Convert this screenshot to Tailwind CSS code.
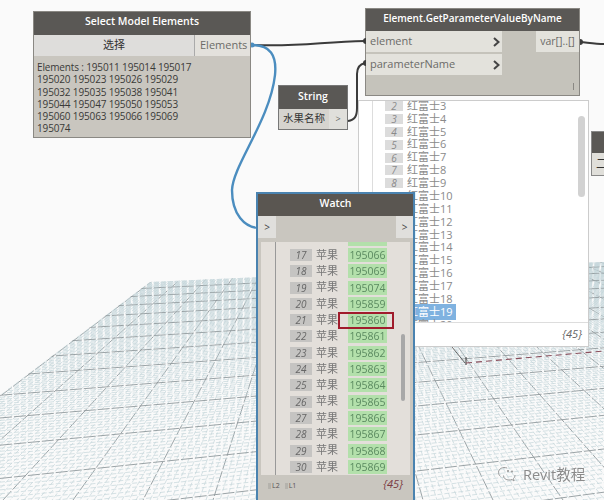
<!DOCTYPE html>
<html lang="en">
<head>
  <meta charset="UTF-8" />
  <title>Dynamo Graph</title>
  <script src="https://cdn.jsdelivr.net/npm/@tailwindcss/browser@4"></script>
</head>
<body class="bg-[#fafafa] font-['Open_Sans','Noto_Sans_CJK_SC',sans-serif] overflow-hidden">
<div class="relative w-[604px] h-[500px] overflow-hidden blur-[0.4px]">

  <!-- ground grid, filled in by the script below -->
  <svg class="absolute inset-0" width="604" height="500" fill="none">
    <defs><clipPath id="ground"><polygon points="0,395 150,282 604,262 604,500 0,500" /></clipPath></defs>
    <g id="grid" clip-path="url(#ground)"></g>
    <path d="M452 347L465 363" stroke="#444" stroke-width="0.8" />
    <path d="M466 357V365" stroke="#333" stroke-width="1" />
    <path d="M466 363L604 351" stroke="#8a4f5c" stroke-width="1.1" stroke-dasharray="6 4" />
  </svg>

  <!-- wires -->
  <svg class="absolute inset-0" width="604" height="500" fill="none">
    <path d="M252 45C300 47 320 42 365 41" stroke="#3b3b3b" stroke-width="2" />
    <path d="M580 42C590 43 596 44 604 44" stroke="#3b3b3b" stroke-width="2" />
    <path d="M348 121C355 120 357 116 357 108V74C357 68 360 64 365 63" stroke="#3b3b3b" stroke-width="2" />
    <path d="M252 45C270 45 277 55 275 75C270 120 233 165 232 190C232 215 245 227 258 228" stroke="#4b8dbf" stroke-width="2.4" />
    <circle cx="252" cy="45" r="2.500" fill="#4b8dbf" />
  </svg>

  <!-- Select Model Elements -->
  <div class="absolute left-[33px] top-[11px] w-[218px] h-[127px] flex flex-col border border-[#8a8883] bg-[#c9c6bf]">
    <div class="h-[23px] shrink-0 pb-[3px] bg-[#5a5855] text-white text-[10.5px] font-semibold flex items-center justify-center">Select Model Elements</div>
    <div class="h-[21px] shrink-0 flex text-[11px]">
      <div class="w-[161px] bg-[#dedddb] text-[#333] flex items-center justify-center border-r border-[#aaa]">选择</div>
      <div class="flex-1 bg-[#e3e1dc] text-[#6b6b68] flex items-center pl-[5px]">Elements</div>
    </div>
    <div class="px-[3px] pt-[5px] text-[10px] tracking-[-0.15px] leading-[12.3px] text-[#3a3a38] whitespace-nowrap">Elements : 195011 195014 195017<br />195020 195023 195026 195029<br />195032 195035 195038 195041<br />195044 195047 195050 195053<br />195060 195063 195066 195069<br />195074</div>
  </div>

  <!-- Element.GetParameterValueByName -->
  <div class="absolute left-[365px] top-[8px] w-[215px] h-[88px] flex flex-col border border-[#8a8883] bg-[#c5c3bb]">
    <div class="h-[22px] shrink-0 pb-[4px] bg-[#5a5855] text-white text-[10px] font-semibold flex items-center justify-center">Element.GetParameterValueByName</div>
    <div class="flex justify-between">
      <div class="w-[136px] flex flex-col gap-[2px] text-[11px] text-[#6b6b68]">
        <div class="h-[21px] bg-[#e3e2dc] flex items-center justify-between pl-[4px] pr-[2px]">element
          <svg width="7" height="10" viewBox="0 0 7 10" fill="none" stroke="#444" stroke-width="2"><path d="M1 1L5.500 5L1 9" /></svg>
        </div>
        <div class="h-[21px] bg-[#e3e2dc] flex items-center justify-between pl-[4px] pr-[2px]">parameterName
          <svg width="7" height="10" viewBox="0 0 7 10" fill="none" stroke="#444" stroke-width="2"><path d="M1 1L5.500 5L1 9" /></svg>
        </div>
      </div>
      <div class="w-[43px] h-[21px] bg-[#e3e2dc] text-[10.500px] text-[#6b6b68] flex items-center justify-center">var[]..[]</div>
    </div>
    <div class="absolute right-[5px] bottom-[5px] w-px h-[7px] bg-[#8a8883]"></div>
  </div>
  <div class="absolute left-[363px] top-[38px] w-[3px] h-[6px] bg-[#3b3b3b] rounded-l-full"></div>
  <div class="absolute left-[363px] top-[60px] w-[3px] h-[6px] bg-[#3b3b3b] rounded-l-full"></div>
  <div class="absolute left-[580px] top-[39px] w-[3px] h-[6px] bg-[#3b3b3b] rounded-r-full"></div>

  <!-- String -->
  <div class="absolute left-[278px] top-[85px] w-[70px] h-[45px] flex flex-col border border-[#777] bg-[#c9c6bf]">
    <div class="h-[23px] shrink-0 pb-[2px] bg-[#5a5855] text-white text-[10.5px] font-semibold flex items-center justify-center">String</div>
    <div class="flex-1 flex text-[10.5px]">
      <div class="w-[50px] bg-[#d6d4cf] text-[#333] flex items-center justify-center whitespace-nowrap">水果名称</div>
      <div class="flex-1 bg-[#e0dfdb] text-[#666] text-[9px] flex items-center justify-center">&gt;</div>
    </div>
  </div>

  <!-- code block output list -->
  <div class="absolute left-[358px] top-[100px] w-[231px] h-[247px] bg-white border border-[#ccc] flex flex-col">
    <div class="flex-1 flex overflow-hidden relative">
      <div class="w-[14px] shrink-0 border-r border-[#ddd]"></div>
      <div class="-mt-[1.4px] pl-[12px] flex flex-col text-[11px] text-[#8a8a8a]">
        <div class="h-[12.875px] flex items-center gap-[4px]"><span class="w-[18px] h-[10px] bg-[#dcdcdc] italic text-[10px] leading-[10px] text-center">2</span><span>红富士3</span></div>
        <div class="h-[12.875px] flex items-center gap-[4px]"><span class="w-[18px] h-[10px] bg-[#dcdcdc] italic text-[10px] leading-[10px] text-center">3</span><span>红富士4</span></div>
        <div class="h-[12.875px] flex items-center gap-[4px]"><span class="w-[18px] h-[10px] bg-[#dcdcdc] italic text-[10px] leading-[10px] text-center">4</span><span>红富士5</span></div>
        <div class="h-[12.875px] flex items-center gap-[4px]"><span class="w-[18px] h-[10px] bg-[#dcdcdc] italic text-[10px] leading-[10px] text-center">5</span><span>红富士6</span></div>
        <div class="h-[12.875px] flex items-center gap-[4px]"><span class="w-[18px] h-[10px] bg-[#dcdcdc] italic text-[10px] leading-[10px] text-center">6</span><span>红富士7</span></div>
        <div class="h-[12.875px] flex items-center gap-[4px]"><span class="w-[18px] h-[10px] bg-[#dcdcdc] italic text-[10px] leading-[10px] text-center">7</span><span>红富士8</span></div>
        <div class="h-[12.875px] flex items-center gap-[4px]"><span class="w-[18px] h-[10px] bg-[#dcdcdc] italic text-[10px] leading-[10px] text-center">8</span><span>红富士9</span></div>
        <div class="h-[12.875px] flex items-center gap-[4px]"><span class="w-[18px] h-[10px]"></span><span>红富士10</span></div>
        <div class="h-[12.875px] flex items-center gap-[4px]"><span class="w-[18px] h-[10px]"></span><span>红富士11</span></div>
        <div class="h-[12.875px] flex items-center gap-[4px]"><span class="w-[18px] h-[10px]"></span><span>红富士12</span></div>
        <div class="h-[12.875px] flex items-center gap-[4px]"><span class="w-[18px] h-[10px]"></span><span>红富士13</span></div>
        <div class="h-[12.875px] flex items-center gap-[4px]"><span class="w-[18px] h-[10px]"></span><span>红富士14</span></div>
        <div class="h-[12.875px] flex items-center gap-[4px]"><span class="w-[18px] h-[10px]"></span><span>红富士15</span></div>
        <div class="h-[12.875px] flex items-center gap-[4px]"><span class="w-[18px] h-[10px]"></span><span>红富士16</span></div>
        <div class="h-[12.875px] flex items-center gap-[4px]"><span class="w-[18px] h-[10px]"></span><span>红富士17</span></div>
        <div class="h-[12.875px] flex items-center gap-[4px]"><span class="w-[18px] h-[10px]"></span><span>红富士18</span></div>
        <div class="h-[12.875px] flex items-center gap-[4px]"><span class="w-[18px] h-[10px]"></span><span class="bg-[#7fb2e0] text-white pr-[3px]">红富士19</span></div>
        <div class="h-[12.875px] flex items-center gap-[4px]"><span class="w-[18px] h-[10px]"></span><span>红富士20</span></div>
      </div>
      <div class="absolute right-[3px] top-[15px] w-[7px] h-[81px] rounded-full bg-[#d2d2d2]"></div>
    </div>
    <div class="h-[24px] shrink-0 border-t border-[#ddd] flex items-center justify-end pr-[6px] text-[11px] italic text-[#666]">{45}</div>
  </div>

  <!-- right edge node -->
  <div class="absolute left-[591px] top-[131px] w-[20px] h-[45px] flex flex-col border border-[#888] bg-[#e0dfda]">
    <div class="h-[21px] shrink-0 bg-[#5a5855]"></div>
    <div class="flex-1 pl-[4px] text-[12px] leading-[22px] text-[#333] whitespace-nowrap">二</div>
  </div>

  <!-- Watch -->
  <div class="absolute left-[256px] top-[192px] w-[159px] h-[312px] border-2 border-[#4a83b0] bg-[#c9c6bf] flex flex-col">
    <div class="h-[22px] shrink-0 pb-[3px] bg-[#5a5651] text-white text-[10.5px] font-semibold flex items-center justify-center">Watch</div>
    <div class="h-[22px] shrink-0 flex justify-between text-[10px] text-[#444]">
      <div class="w-[18px] bg-[#e0dfdc] flex items-center justify-center">&gt;</div>
      <div class="w-[17px] bg-[#e0dfdc] flex items-center justify-center">&gt;</div>
    </div>
    <div class="h-[4px] shrink-0"></div>
    <div class="relative h-[233px] shrink-0 mx-[3px] bg-[#e3dfda] flex overflow-hidden">
      <div class="w-[15px] shrink-0 border-r border-[#999]"></div>
      <div class="-mt-[10.7px] pl-[14px] flex flex-col">
        <div class="h-[16.3px] flex items-center text-[11px]"><span class="w-[22px] h-[12px]"></span><span class="w-[36px]"></span><span class="w-[39px] h-[14px] bg-[#b3e0ab]"></span></div>
        <div class="h-[16.3px] flex items-center text-[11px]"><span class="w-[22px] h-[12px] bg-[#c5c4c2] italic text-[10px] leading-[12px] text-center text-[#666]">17</span><span class="w-[36px] pl-[4px] text-[#777]">苹果</span><span class="w-[39px] h-[14px] bg-[#b3e0ab] text-[10.5px] leading-[14px] text-center text-[#5b8a60]">195066</span></div>
        <div class="h-[16.3px] flex items-center text-[11px]"><span class="w-[22px] h-[12px] bg-[#c5c4c2] italic text-[10px] leading-[12px] text-center text-[#666]">18</span><span class="w-[36px] pl-[4px] text-[#777]">苹果</span><span class="w-[39px] h-[14px] bg-[#b3e0ab] text-[10.5px] leading-[14px] text-center text-[#5b8a60]">195069</span></div>
        <div class="h-[16.3px] flex items-center text-[11px]"><span class="w-[22px] h-[12px] bg-[#c5c4c2] italic text-[10px] leading-[12px] text-center text-[#666]">19</span><span class="w-[36px] pl-[4px] text-[#777]">苹果</span><span class="w-[39px] h-[14px] bg-[#b3e0ab] text-[10.5px] leading-[14px] text-center text-[#5b8a60]">195074</span></div>
        <div class="h-[16.3px] flex items-center text-[11px]"><span class="w-[22px] h-[12px] bg-[#c5c4c2] italic text-[10px] leading-[12px] text-center text-[#666]">20</span><span class="w-[36px] pl-[4px] text-[#777]">苹果</span><span class="w-[39px] h-[14px] bg-[#b3e0ab] text-[10.5px] leading-[14px] text-center text-[#5b8a60]">195859</span></div>
        <div class="h-[16.3px] flex items-center text-[11px]"><span class="w-[22px] h-[12px] bg-[#c5c4c2] italic text-[10px] leading-[12px] text-center text-[#666]">21</span><span class="w-[36px] pl-[4px] text-[#777]">苹果</span><span class="w-[39px] h-[14px] bg-[#b3e0ab] text-[10.5px] leading-[14px] text-center text-[#5b8a60]">195860</span></div>
        <div class="h-[16.3px] flex items-center text-[11px]"><span class="w-[22px] h-[12px] bg-[#c5c4c2] italic text-[10px] leading-[12px] text-center text-[#666]">22</span><span class="w-[36px] pl-[4px] text-[#777]">苹果</span><span class="w-[39px] h-[14px] bg-[#b3e0ab] text-[10.5px] leading-[14px] text-center text-[#5b8a60]">195861</span></div>
        <div class="h-[16.3px] flex items-center text-[11px]"><span class="w-[22px] h-[12px] bg-[#c5c4c2] italic text-[10px] leading-[12px] text-center text-[#666]">23</span><span class="w-[36px] pl-[4px] text-[#777]">苹果</span><span class="w-[39px] h-[14px] bg-[#b3e0ab] text-[10.5px] leading-[14px] text-center text-[#5b8a60]">195862</span></div>
        <div class="h-[16.3px] flex items-center text-[11px]"><span class="w-[22px] h-[12px] bg-[#c5c4c2] italic text-[10px] leading-[12px] text-center text-[#666]">24</span><span class="w-[36px] pl-[4px] text-[#777]">苹果</span><span class="w-[39px] h-[14px] bg-[#b3e0ab] text-[10.5px] leading-[14px] text-center text-[#5b8a60]">195863</span></div>
        <div class="h-[16.3px] flex items-center text-[11px]"><span class="w-[22px] h-[12px] bg-[#c5c4c2] italic text-[10px] leading-[12px] text-center text-[#666]">25</span><span class="w-[36px] pl-[4px] text-[#777]">苹果</span><span class="w-[39px] h-[14px] bg-[#b3e0ab] text-[10.5px] leading-[14px] text-center text-[#5b8a60]">195864</span></div>
        <div class="h-[16.3px] flex items-center text-[11px]"><span class="w-[22px] h-[12px] bg-[#c5c4c2] italic text-[10px] leading-[12px] text-center text-[#666]">26</span><span class="w-[36px] pl-[4px] text-[#777]">苹果</span><span class="w-[39px] h-[14px] bg-[#b3e0ab] text-[10.5px] leading-[14px] text-center text-[#5b8a60]">195865</span></div>
        <div class="h-[16.3px] flex items-center text-[11px]"><span class="w-[22px] h-[12px] bg-[#c5c4c2] italic text-[10px] leading-[12px] text-center text-[#666]">27</span><span class="w-[36px] pl-[4px] text-[#777]">苹果</span><span class="w-[39px] h-[14px] bg-[#b3e0ab] text-[10.5px] leading-[14px] text-center text-[#5b8a60]">195866</span></div>
        <div class="h-[16.3px] flex items-center text-[11px]"><span class="w-[22px] h-[12px] bg-[#c5c4c2] italic text-[10px] leading-[12px] text-center text-[#666]">28</span><span class="w-[36px] pl-[4px] text-[#777]">苹果</span><span class="w-[39px] h-[14px] bg-[#b3e0ab] text-[10.5px] leading-[14px] text-center text-[#5b8a60]">195867</span></div>
        <div class="h-[16.3px] flex items-center text-[11px]"><span class="w-[22px] h-[12px] bg-[#c5c4c2] italic text-[10px] leading-[12px] text-center text-[#666]">29</span><span class="w-[36px] pl-[4px] text-[#777]">苹果</span><span class="w-[39px] h-[14px] bg-[#b3e0ab] text-[10.5px] leading-[14px] text-center text-[#5b8a60]">195868</span></div>
        <div class="h-[16.3px] flex items-center text-[11px]"><span class="w-[22px] h-[12px] bg-[#c5c4c2] italic text-[10px] leading-[12px] text-center text-[#666]">30</span><span class="w-[36px] pl-[4px] text-[#777]">苹果</span><span class="w-[39px] h-[14px] bg-[#b3e0ab] text-[10.5px] leading-[14px] text-center text-[#5b8a60]">195869</span></div>
      </div>
      <div class="absolute right-[5px] top-[92px] w-[4px] h-[67px] rounded-full bg-[#a8a8a8]"></div>
    </div>
    <div class="flex-1 pl-[10px] pr-[10px] pt-[1px] flex justify-between items-start text-[#555]">
      <div class="flex gap-[5px] mt-[4px] text-[7px] leading-[12px]">
        <span class="flex items-center gap-[1px]"><span class="w-[3px] h-[6px] bg-[#b5b3ad]"></span>L2</span>
        <span class="flex items-center gap-[1px]"><span class="w-[3px] h-[6px] bg-[#b5b3ad]"></span>L1</span>
      </div>
      <span class="text-[11px] italic text-[#7a3a42]">{45}</span>
    </div>
  </div>
  <!-- highlight drawn over the row for 195860 -->
  <div class="absolute left-[338px] top-[312px] w-[56px] h-[17px] border-2 border-[#a01c2c]"></div>

  <!-- watermark -->
  <div class="absolute left-[497px] top-[466px] flex items-center gap-[7px]">
    <svg width="19" height="17" viewBox="0 0 19 17" fill="none" stroke="#9a9a9a" stroke-width="1">
      <path d="M10 2C6 .5 1.500 2.500 1.500 6.500C1.500 8.500 2.500 9.500 3.500 10.500" />
      <path d="M6.500 9.500C6.500 12.500 9 14 12 14C13 14 14 13.800 15 13.500L17 15L16.500 12.500C17.500 11.500 18 10.500 18 9" />
      <circle cx="11" cy="5" r="0.700" fill="#9a9a9a" />
      <circle cx="15" cy="5.500" r="0.700" fill="#9a9a9a" />
    </svg>
    <span class="text-[14.5px] leading-[17px] text-[#8b8b8b] [text-shadow:0_0_2px_#fff]">Revit教程</span>
  </div>
</div>

<script>
  // perspective ground plane: radial lines meet at one vanishing point, cross lines at another
  const vp1 = [324, 151], vp2 = [3200, 144];
  const grid = document.getElementById('grid');
  const ns = 'http://www.w3.org/2000/svg';

  function addLine(x1, y1, x2, y2, major) {
    const l = document.createElementNS(ns, 'line');
    l.setAttribute('x1', x1); l.setAttribute('y1', y1);
    l.setAttribute('x2', x2); l.setAttribute('y2', y2);
    l.setAttribute('stroke', major ? '#8f989c' : '#c4d5da');
    l.setAttribute('stroke-width', major ? 0.9 : 0.7);
    l.setAttribute('stroke-dasharray', major ? '12 2' : '5 2');
    grid.appendChild(l);
  }

  for (let i = -30; i < 300; i++) {
    addLine(vp1[0], vp1[1], 3 + i * 7, 500, i % 10 === 0);
  }

  for (let i = 0; i < 150; i++) {
    const diff = 1 / (0.0020 + i * 0.000033);
    const y0 = 144 + diff;
    addLine(0, y0, 604, y0 - diff * 604 / 3200, i % 10 === 0);
  }
</script>
</body>
</html>
